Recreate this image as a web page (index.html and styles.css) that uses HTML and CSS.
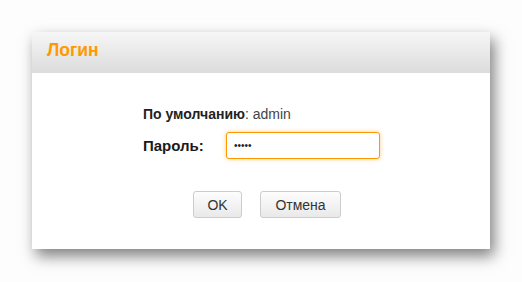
FILE: index.html
```html
<!DOCTYPE html>
<html lang="ru">
<head>
  <meta charset="UTF-8">
  <title>Логин</title>
  <link rel="stylesheet" href="styles.css">
</head>
<body>
  <!-- Login dialog -->
  <div class="dialog">
    <div class="dialog-header">Логин</div>
    <div class="dialog-body">
      <div class="form">
        <div class="hint"><b>По умолчанию</b>: admin</div>
        <div class="row">
          <label for="password">Пароль:</label>
          <input type="password" id="password" value="admin">
        </div>
      </div>
      <div class="buttons">
        <button class="btn btn-ok">OK</button>
        <button class="btn btn-cancel">Отмена</button>
      </div>
    </div>
  </div>
</body>
</html>
```

FILE: styles.css
```css
body {
  margin: 0;
  padding: 32px;
  background: #fdfdfd;
  font-family: "Liberation Sans", Arial, sans-serif;
}
.dialog {
  width: 458px;
  height: 217px;
  background: #fff;
  box-shadow: 4px 7px 14px rgba(0, 0, 0, 0.5);
}
.dialog-header {
  height: 41px;
  box-sizing: border-box;
  padding: 8px 0 0 15px;
  background: linear-gradient(#f6f6f6, #dcdcdc);
  color: #f90;
  font-size: 17.5px;
  font-weight: bold;
  line-height: 20px;
}
.dialog-body {
  padding-top: 33px;
}
.form {
  width: 237px;
  margin-left: 111px;
  font-size: 14px;
  line-height: 17px;
  color: #444;
}
.hint b {
  color: #222;
}
.row {
  display: flex;
  align-items: center;
  margin-top: 9px;
}
.row label {
  width: 83px;
  color: #1a1a1a;
  font-size: 15px;
  font-weight: bold;
}
.row input {
  width: 154px;
  height: 27px;
  box-sizing: border-box;
  padding: 0 7px;
  border: 1px solid #f90;
  border-radius: 3px;
  box-shadow: 0 0 4px rgba(255, 153, 0, 0.5);
  font-family: "Liberation Sans", Arial, sans-serif;
  font-size: 10px;
  color: #222;
  outline: none;
}
.buttons {
  display: flex;
  gap: 18px;
  margin: 32px 0 0 161px;
}
.btn {
  height: 27px;
  border: 1px solid #ccc;
  border-radius: 3px;
  background: linear-gradient(#fdfdfd, #e9e9e9);
  color: #333;
  font-family: "Liberation Sans", Arial, sans-serif;
  font-size: 14px;
}
.btn-ok {
  width: 49px;
}
.btn-cancel {
  width: 81px;
}
```
